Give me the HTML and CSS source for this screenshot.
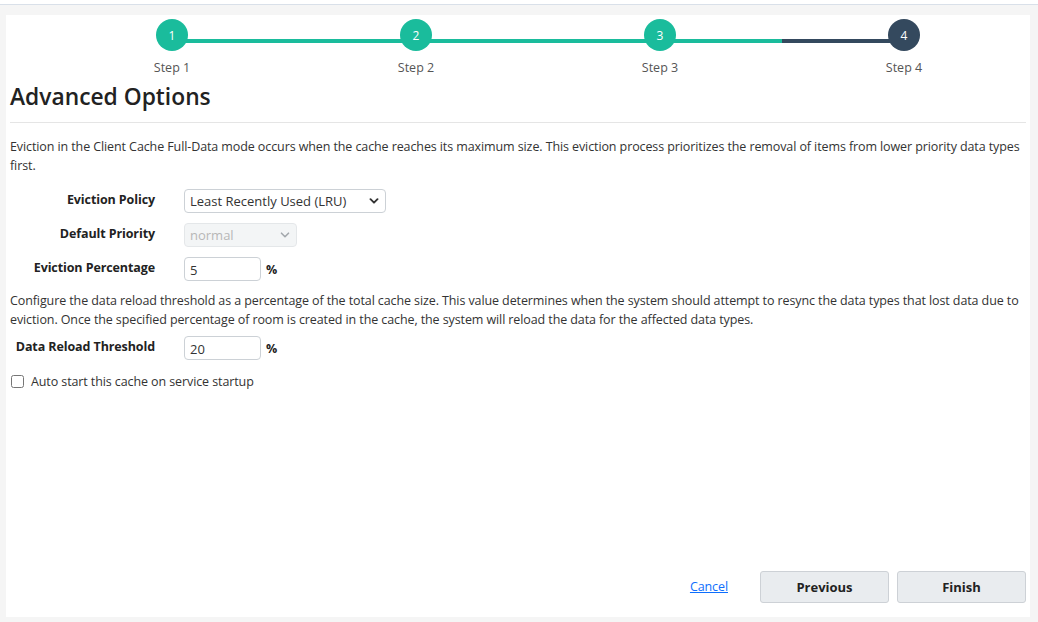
FILE: index.html
```html
<!DOCTYPE html>
<html lang="en">
<head>
<meta charset="utf-8">
<title>Advanced Options</title>
<link rel="stylesheet" href="styles.css">
</head>
<body>
<div class="topbar"></div>
<main class="page">
  <section class="panel">
    <ol class="stepper">
      <li class="step done"><span class="dot">1</span><span class="label">Step 1</span></li>
      <li class="step done"><span class="dot">2</span><span class="label">Step 2</span></li>
      <li class="step done half"><span class="dot">3</span><span class="label">Step 3</span></li>
      <li class="step current"><span class="dot">4</span><span class="label">Step 4</span></li>
    </ol>

    <h1 class="title">Advanced Options</h1>
    <hr class="rule">

    <p class="text">Eviction in the Client Cache Full-Data mode occurs when the cache reaches its maximum size. This eviction process prioritizes the removal of items from lower priority data types first.</p>

    <div class="form">
      <label class="flabel" for="policy">Eviction Policy</label>
      <div class="field">
        <span class="selectwrap wide">
          <select id="policy" class="select">
            <option>Least Recently Used (LRU)</option>
          </select>
          <svg class="chev" viewBox="0 0 10 6" width="10" height="6"><path d="M1.5 1.2l3.5 3.5 3.5-3.5" fill="none" stroke="currentColor" stroke-width="1.9" stroke-linecap="round" stroke-linejoin="round"/></svg>
        </span>
      </div>

      <label class="flabel" for="prio">Default Priority</label>
      <div class="field">
        <span class="selectwrap narrow disabled">
          <select id="prio" class="select" disabled>
            <option>normal</option>
          </select>
          <svg class="chev" viewBox="0 0 10 6" width="10" height="6"><path d="M1.5 1.2l3.5 3.5 3.5-3.5" fill="none" stroke="currentColor" stroke-width="1.6" stroke-linecap="round" stroke-linejoin="round"/></svg>
        </span>
      </div>

      <label class="flabel" for="pct">Eviction Percentage</label>
      <div class="field">
        <input id="pct" class="input" type="text" value="5">
        <span class="unit">%</span>
      </div>
    </div>

    <p class="text text2">Configure the data reload threshold as a percentage of the total cache size. This value determines when the system should attempt to resync the data types that lost data due to eviction. Once the specified percentage of room is created in the cache, the system will reload the data for the affected data types.</p>

    <div class="form form2">
      <label class="flabel" for="reload">Data Reload Threshold</label>
      <div class="field">
        <input id="reload" class="input" type="text" value="20">
        <span class="unit">%</span>
      </div>
    </div>

    <label class="check">
      <input type="checkbox" class="box">
      <span>Auto start this cache on service startup</span>
    </label>

    <footer class="actions">
      <a class="cancel" href="#">Cancel</a>
      <button class="btn" type="button">Previous</button>
      <button class="btn" type="button">Finish</button>
    </footer>
  </section>
</main>
</body>
</html>
```

FILE: styles.css
```css
* { box-sizing: border-box; }

html, body {
  margin: 0;
  padding: 0;
  height: 100%;
}

body {
  font-family: "Open Sans", "Noto Sans", "Liberation Sans", sans-serif;
  font-size: 12.5px;
  letter-spacing: -0.1px;
  color: #333;
  background: #f5f5f5;
  display: flex;
  flex-direction: column;
}

.topbar {
  height: 5px;
  background: #fff;
  border-bottom: 1px solid #d9e0e9;
  flex: none;
}

.page {
  flex: 1;
  display: flex;
  padding: 10px 8px 5px 6px;
  min-height: 0;
}

.panel {
  flex: 1;
  background: #fff;
  padding: 4px 4px 14px 4px;
  display: flex;
  flex-direction: column;
}

/* stepper */
.stepper {
  list-style: none;
  margin: 0;
  padding: 0 0 0 40px;
  display: grid;
  grid-template-columns: repeat(4, 1fr);
}

.step {
  position: relative;
  display: flex;
  flex-direction: column;
  align-items: center;
}

.step:not(:last-child)::after {
  content: "";
  position: absolute;
  left: 50%;
  width: 100%;
  top: 20px;
  height: 4px;
  background: #1abc9c;
  z-index: 0;
}

.step.half::after {
  background: linear-gradient(to right, #1abc9c 50%, #34495e 50%);
}

.dot {
  position: relative;
  z-index: 1;
  width: 32px;
  height: 32px;
  border-radius: 50%;
  background: #1abc9c;
  color: #fff;
  font-size: 12px;
  letter-spacing: 0;
  display: flex;
  align-items: center;
  justify-content: center;
}

.step.current .dot { background: #34495e; }

.label {
  margin-top: 8px;
  font-size: 12.5px;
  letter-spacing: 0;
  color: #555;
  line-height: 18px;
}

.title {
  margin: 4px 0 0 0;
  font-size: 22.8px;
  font-weight: 600;
  letter-spacing: 0;
  color: #222;
  line-height: 32px;
}

.rule {
  border: 0;
  border-top: 1px solid #e5e5e5;
  margin: 9px 0 15px 0;
}

.text {
  margin: 0;
  line-height: 18.5px;
}

.text2 { margin-top: 11px; }

.form {
  display: grid;
  grid-template-columns: 145px auto;
  column-gap: 29px;
  row-gap: 10px;
  align-items: center;
  margin-top: 14px;
  justify-content: start;
}

.form2 { margin-top: 7px; }

.flabel {
  text-align: right;
  white-space: nowrap;
  font-weight: 700;
  color: #222;
  margin-top: -4px;
}

.field {
  display: flex;
  align-items: center;
  gap: 5px;
}

.selectwrap {
  position: relative;
  display: inline-block;
  color: #333;
}

.selectwrap.wide { width: 202px; }
.selectwrap.narrow { width: 113px; }
.selectwrap.disabled { color: #a3a8ad; }

.select {
  appearance: none;
  -webkit-appearance: none;
  width: 100%;
  height: 24px;
  border: 1px solid #ccd1d6;
  border-radius: 4px;
  background: #fff;
  font: inherit;
  font-size: 13px;
  letter-spacing: 0;
  color: #333;
  padding: 0 20px 0 5px;
}

.select:disabled {
  background: #eff1f3;
  color: #999;
  border-color: #dadde1;
}

.chev {
  position: absolute;
  right: 7px;
  top: 9px;
  pointer-events: none;
}

.input {
  width: 77px;
  height: 24px;
  border: 1px solid #ccd1d6;
  border-radius: 4px;
  font: inherit;
  font-size: 13px;
  letter-spacing: 0;
  color: #333;
  padding: 2px 5px 0 5px;
}

.unit {
  font-weight: 700;
  color: #222;
}

.check {
  display: flex;
  align-items: center;
  gap: 7px;
  margin-top: 13px;
  margin-left: 1px;
  color: #333;
}

.box {
  margin: 0;
  width: 13px;
  height: 13px;
}

.actions {
  margin-top: auto;
  display: flex;
  justify-content: flex-end;
  align-items: center;
  gap: 8px;
}

.cancel {
  color: #0d6efd;
  text-decoration: underline;
  margin-right: 24px;
  margin-top: -2px;
}

.btn {
  width: 129px;
  height: 32px;
  border: 1px solid #cdd1d6;
  border-radius: 3px;
  background: #e9ecef;
  font: inherit;
  font-size: 13px;
  font-weight: 700;
  letter-spacing: 0;
  color: #222;
}
```
